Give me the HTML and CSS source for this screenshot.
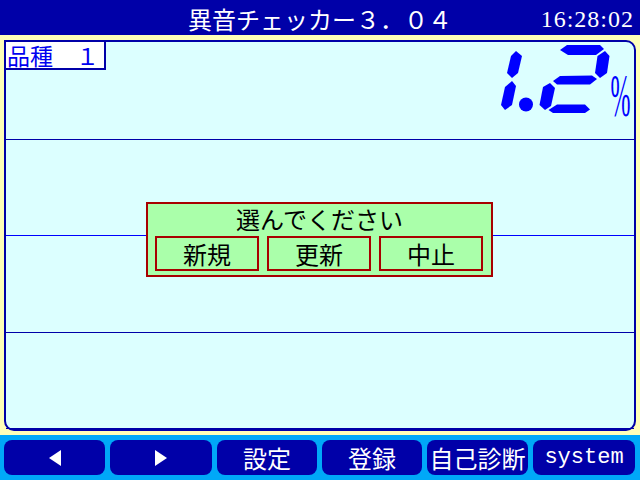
FILE: index.html
```html
<!DOCTYPE html>
<html lang="ja">
<head>
<meta charset="utf-8">
<title>異音チェッカー</title>
<link rel="stylesheet" href="styles.css">
</head>
<body>
<div class="app">
  <header class="header">
    <div class="spacer"></div>
    <div class="title">異音チェッカー３．０４</div>
    <div class="clock">16:28:02</div>
  </header>
  <main class="main">
    <section class="panel">
      <div class="top">
        <div class="label">品種　１</div>
        <svg class="readout" viewBox="494 42 140 97" width="140" height="97">
          <g fill="#0000ff">
            <polygon points="516,51 522,56 518,73 512,78 507,73 511,56"/>
            <polygon points="512,81 516,86 512,105 505,110 501,105 505,87"/>
            <circle cx="526" cy="104.5" r="7"/>
            <polygon points="560,50 567,45 600,45 604,49 596,55 568,55"/>
            <polygon points="605,51 609.5,56 607,73 600,78 595,73 597.5,56"/>
            <polygon points="553,81 560,76 592,75.5 597,79 590,84.5 557,84.5"/>
            <polygon points="550,83 555,88 551,106 545,110 539.5,105 543,87"/>
            <polygon points="548.5,110 557,104.5 585,104.5 590,109.5 585,113 553,113"/>
          </g>
          <text class="pct" transform="translate(610.5 115.5) scale(1 2.55)">%</text>
        </svg>
      </div>
      <div class="row row-dark"></div>
      <div class="row row-mid"></div>
      <div class="row row-dark"></div>
      <div class="row row-last"></div>
      <div class="dialog">
        <div class="dialog-title">選んでください</div>
        <div class="dialog-buttons">
          <div class="dbtn">新規</div>
          <div class="dbtn">更新</div>
          <div class="dbtn">中止</div>
        </div>
      </div>
    </section>
  </main>
  <nav class="footer">
    <div class="fbtn"><span class="tri tri-left"></span></div>
    <div class="fbtn"><span class="tri tri-right"></span></div>
    <div class="fbtn">設定</div>
    <div class="fbtn">登録</div>
    <div class="fbtn">自己診断</div>
    <div class="fbtn mono">system</div>
  </nav>
</div>
</body>
</html>
```

FILE: styles.css
```css
* { box-sizing: border-box; }
html, body { margin: 0; padding: 0; }
body {
  width: 640px;
  height: 480px;
  overflow: hidden;
  font-family: "Liberation Serif", "Noto Sans CJK JP", serif;
}
.app {
  display: flex;
  flex-direction: column;
  width: 640px;
  height: 480px;
}
.header {
  height: 35px;
  background: #0000a8;
  color: #ffffff;
  display: grid;
  grid-template-columns: 1fr auto 1fr;
  align-items: center;
}
.title {
  font-family: "Noto Sans CJK JP", sans-serif;
  font-size: 24px;
  line-height: 35px;
}
.clock {
  justify-self: end;
  padding-right: 6px;
  font-family: "Liberation Serif", serif;
  font-size: 24px;
  letter-spacing: 1px;
  line-height: 35px;
  padding-top: 2px;
}
.main {
  height: 400px;
  background: #ffffb8;
  padding: 5px 4px 4px 4px;
}
.panel {
  position: relative;
  height: 391px;
  background: #dcffff;
  border: 2px solid #0000a8;
  border-radius: 0 10px 10px 10px;
  display: flex;
  flex-direction: column;
}
.top {
  height: 97px;
  display: flex;
  justify-content: space-between;
  align-items: flex-start;
}
.label {
  width: 100px;
  height: 28px;
  background: #ffffff;
  border-right: 2px solid #0000a8;
  border-bottom: 2px solid #0000a8;
  color: #0000f0;
  font-family: "Noto Sans CJK JP", sans-serif;
  font-size: 23px;
  line-height: 26px;
  padding-left: 1px;
  white-space: nowrap;
}
.readout { display: block; }
.pct {
  fill: #0000ff;
  font-family: "Liberation Serif", serif;
  font-size: 24px;
}
.row { height: 97px; border-top: 1px solid #0000a8; }
.row-mid { border-top-color: #0000ff; }
.row-last { flex: 1; }
.dialog {
  position: absolute;
  left: 140px;
  top: 160px;
  width: 347px;
  height: 75px;
  background: #aaffaa;
  border: 2px solid #a80000;
  padding: 0 0 4px 7px;
  display: flex;
  flex-direction: column;
}
.dialog-title {
  height: 30px;
  margin-bottom: 2px;
  text-align: center;
  padding-right: 7px;
  font-family: "Noto Sans CJK JP", sans-serif;
  font-size: 24px;
  line-height: 30px;
  color: #000000;
}
.dialog-buttons {
  display: flex;
  gap: 8px;
}
.dbtn {
  width: 104px;
  height: 35px;
  border: 2px solid #a80000;
  text-align: center;
  font-family: "Noto Sans CJK JP", sans-serif;
  font-size: 24px;
  line-height: 31px;
  color: #000000;
}
.footer {
  height: 45px;
  background: #00a8f8;
  padding: 5px 4px;
  display: grid;
  grid-template-columns: 101px 102px 100px 100px 101px 102px;
  column-gap: 5px;
}
.fbtn {
  background: #0000a8;
  border-radius: 8px;
  color: #ffffff;
  display: flex;
  align-items: center;
  justify-content: center;
  font-family: "Noto Sans CJK JP", sans-serif;
  font-size: 24px;
  line-height: 35px;
  white-space: nowrap;
}
.fbtn.mono {
  font-family: "Liberation Mono", monospace;
  font-size: 22px;
}
.tri {
  width: 0;
  height: 0;
  border-top: 8.5px solid transparent;
  border-bottom: 8.5px solid transparent;
}
.tri-left { border-right: 12px solid #ffffff; }
.tri-right { border-left: 12px solid #ffffff; }
```
